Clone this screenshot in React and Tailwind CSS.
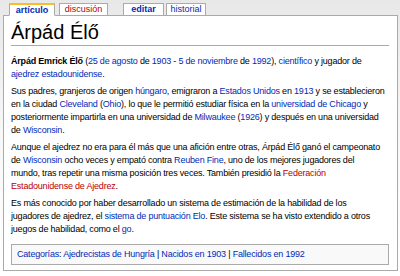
const A = ({ children, red }) => (
  <a className={red ? "text-[#ba0000]" : "text-[#002bb8]"}>{children}</a>
);

export default function App() {
  return (
    <div
      className="w-[400px] h-[276px] overflow-hidden bg-gradient-to-b from-[#e8e8e8] via-[#f8f8f8] to-white"
      style={{ fontFamily: '"Liberation Sans", Arial, sans-serif' }}
    >
      <div className="pl-[9px] pt-[3px] flex items-end gap-[4px] text-[9px] leading-none">
        <div className="w-[46px] h-[13px] bg-white border border-[#aaa] border-t-2 border-t-[#fabd23] border-b-white flex items-center justify-center text-[#002bb8] font-bold relative z-10 -mb-px">
          artículo
        </div>
        <div className="w-[49px] h-[12px] bg-white border border-[#aaa] border-b-0 flex items-center justify-center text-[#ba0000]">
          discusión
        </div>
        <div className="w-[41px] h-[12px] ml-[11px] bg-white border border-[#aaa] border-b-0 flex items-center justify-center text-[#002bb8] font-bold">
          editar
        </div>
        <div className="w-[40px] h-[12px] -ml-[2px] bg-white border border-[#aaa] border-b-0 flex items-center justify-center text-[#002bb8]">
          historial
        </div>
      </div>
      <div className="ml-[3px] mr-[2px] h-[256px] bg-white border border-[#aaa] px-[7px] pt-[4px] text-[9px] leading-[13px] tracking-[-0.2px] text-black">
        <h1 className="text-[20px] leading-[24px] tracking-normal border-b border-[#aaa] pb-[1px] mb-[9px] mr-[1px]">
          Árpád Élő
        </h1>
        <p className="mb-[4px]">
          <b>Árpád Emrick Élő</b> (<A>25 de agosto</A> de <A>1903</A> - <A>5 de noviembre</A> de{" "}
          <A>1992</A>), <A>científico</A> y jugador de <A>ajedrez estadounidense</A>.
        </p>
        <p className="mb-[4px]">
          Sus padres, granjeros de origen <A>húngaro</A>, emigraron a <A>Estados Unidos</A> en{" "}
          <A>1913</A> y se establecieron en la ciudad <A>Cleveland</A> (<A>Ohio</A>), lo que le
          permitió estudiar física en la <A>universidad de Chicago</A> y posteriormente impartirla en
          una universidad de <A>Milwaukee</A> (<A>1926</A>) y después en una universidad de{" "}
          <A>Wisconsin</A>.
        </p>
        <p className="mb-[4px]">
          Aunque el ajedrez no era para él más que una afición entre otras, Árpád Élő ganó el
          campeonato de <A>Wisconsin</A> ocho veces y empató contra <A>Reuben Fine</A>, uno de los
          mejores jugadores del
          <br />
          mundo, tras repetir una misma posición tres veces. También presidió la{" "}
          <A red>Federación</A>
          <br />
          <A red>Estadounidense de Ajedrez</A>.
        </p>
        <p className="mb-[4px]">
          Es más conocido por haber desarrollado un sistema de estimación de la habilidad de los
          <br />
          jugadores de ajedrez, el <A>sistema de puntuación Elo</A>. Este sistema se ha visto
          extendido a otros
          <br />
          juegos de habilidad, como el <A>go</A>.
        </p>
        <div className="mt-[8px] mr-[1px] border border-[#aaa] bg-[#f9f9f9] px-[5px] py-[3px] leading-[13px]">
          <A>Categorías</A>: <A>Ajedrecistas de Hungría</A> | <A>Nacidos en 1903</A> |{" "}
          <A>Fallecidos en 1992</A>
        </div>
      </div>
    </div>
  );
}
